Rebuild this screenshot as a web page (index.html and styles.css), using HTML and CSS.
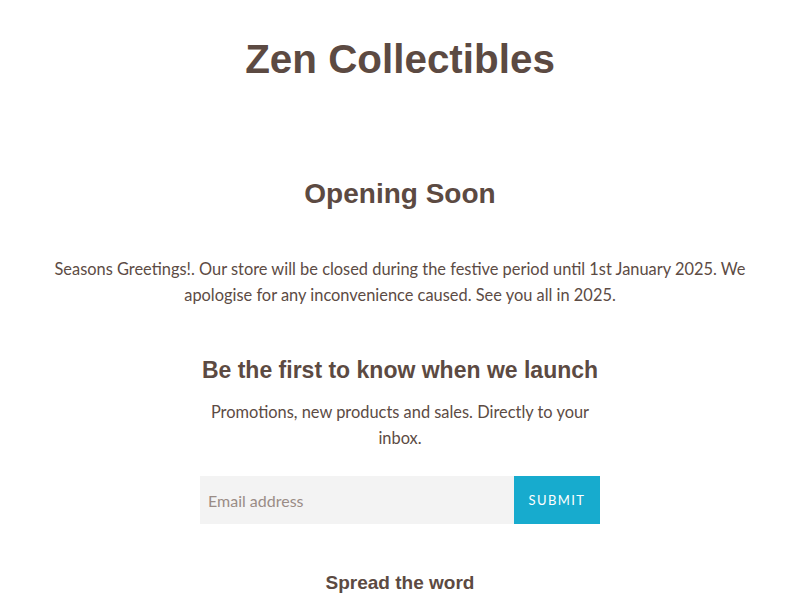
FILE: index.html
```html
<!DOCTYPE html>
<html lang="en">
<head>
  <meta charset="UTF-8" />
  <meta name="viewport" content="width=device-width, initial-scale=1.0"/>
  <title>Zen Collectibles - Opening Soon</title>
  <link rel="stylesheet" href="styles.css">
</head>
<body>

<header class="site-header">
  <h1>Zen Collectibles</h1>
</header>

<main class="page">
  <section class="opening">
    <h2>Opening Soon</h2>
    <p>Seasons Greetings!. Our store will be closed during the festive period until 1st January 2025. We apologise for any inconvenience caused. See you all in 2025.</p>
  </section>

  <!-- Newsletter -->
  <section class="newsletter">
    <h3>Be the first to know when we launch</h3>
    <p>Promotions, new products and sales. Directly to your inbox.</p>
    <form class="signup" onsubmit="return false">
      <input type="email" placeholder="Email address">
      <button type="submit">Submit</button>
    </form>
  </section>

  <section class="share">
    <h4>Spread the word</h4>
  </section>
</main>

</body>
</html>
```

FILE: styles.css
```css
body {
  margin: 0;
  font-family: 'Lato', sans-serif;
  font-size: 16.4px;
  line-height: 26px;
  color: #5c4b44;
  background: #fff;
}

h1, h2, h3, h4 {
  font-family: 'Liberation Sans', Arial, sans-serif;
  font-weight: bold;
  color: #5c4a42;
  margin: 0;
}

.site-header {
  text-align: center;
  padding: 36px 20px 0;
}

.site-header h1 {
  font-size: 40.4px;
  line-height: 46px;
}

.page {
  margin: 0 auto;
  padding: 0 20px;
  text-align: center;
}

.opening {
  padding-top: 95px;
}

.opening h2 {
  font-size: 28px;
  line-height: 34px;
}

.opening p {
  max-width: 700px;
  margin: 45px auto 0;
}

.newsletter {
  padding-top: 48px;
}

.newsletter h3 {
  font-size: 23px;
  line-height: 28px;
}

.newsletter p {
  max-width: 400px;
  margin: 15px auto 0;
}

.signup {
  display: flex;
  justify-content: center;
  margin-top: 25px;
}

.signup input {
  width: 314px;
  height: 48px;
  box-sizing: border-box;
  border: 0;
  padding: 0 8px;
  background: #f3f3f3;
  font-family: 'Lato', sans-serif;
  font-size: 16px;
  color: #5c4b44;
  outline: none;
}

.signup input::placeholder {
  color: #9a8c86;
}

.signup button {
  width: 86px;
  height: 48px;
  border: 0;
  background: #17abce;
  color: #fff;
  font-family: 'Lato', sans-serif;
  font-size: 13px;
  letter-spacing: 1.4px;
  text-transform: uppercase;
  cursor: pointer;
}

.share {
  padding-top: 47px;
}

.share h4 {
  font-size: 19px;
  line-height: 24px;
}
```
